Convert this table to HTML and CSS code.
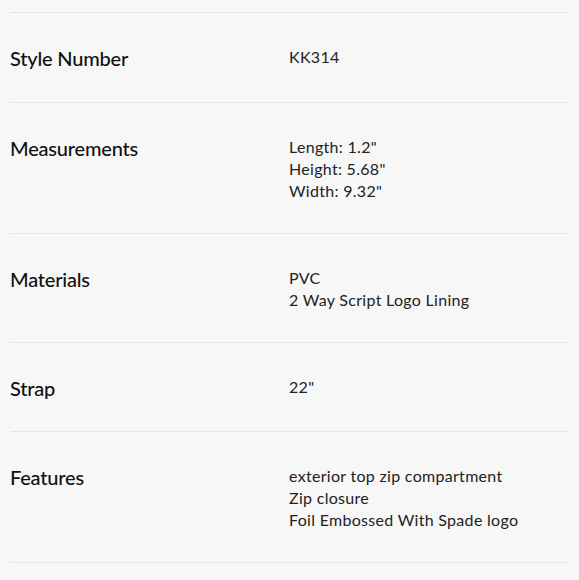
FILE: index.html
```html
<!DOCTYPE html>
<html lang="en">
<head>
<meta charset="utf-8">
<title>Product Details</title>
<link rel="stylesheet" href="styles.css">
</head>
<body>
<div class="specs">
  <div class="row">
    <div class="label">Style Number</div>
    <div class="value">KK314</div>
  </div>
  <div class="row">
    <div class="label">Measurements</div>
    <div class="value">Length: 1.2"<br>Height: 5.68"<br>Width: 9.32"</div>
  </div>
  <div class="row">
    <div class="label">Materials</div>
    <div class="value">PVC<br>2 Way Script Logo Lining</div>
  </div>
  <div class="row">
    <div class="label">Strap</div>
    <div class="value">22"</div>
  </div>
  <div class="row">
    <div class="label">Features</div>
    <div class="value">exterior top zip compartment<br>Zip closure<br>Foil Embossed With Spade logo</div>
  </div>
</div>
</body>
</html>
```
FILE: styles.css
```css
html, body {
  margin: 0;
  padding: 0;
  background: #f7f7f7;
}
body {
  font-family: Lato, "Open Sans", "Liberation Sans", sans-serif;
  color: #1a1a1a;
}
.specs {
  padding: 12px 11px 0 10px;
}
.row {
  display: grid;
  grid-template-columns: 279px 1fr;
  align-items: start;
  padding: 33px 0 31px;
  border-top: 1px solid #e4e4e4;
}
.row:first-child {
  padding-bottom: 32px;
}
.row:last-child {
  border-bottom: 1px solid #e4e4e4;
}
.label {
  font-size: 20px;
  line-height: 23px;
  font-weight: 500;
  color: #111;
  padding-top: 1px;
  letter-spacing: -0.2px;
}
.value {
  font-size: 16px;
  line-height: 22px;
  color: #222;
  letter-spacing: 0.3px;
}
```
